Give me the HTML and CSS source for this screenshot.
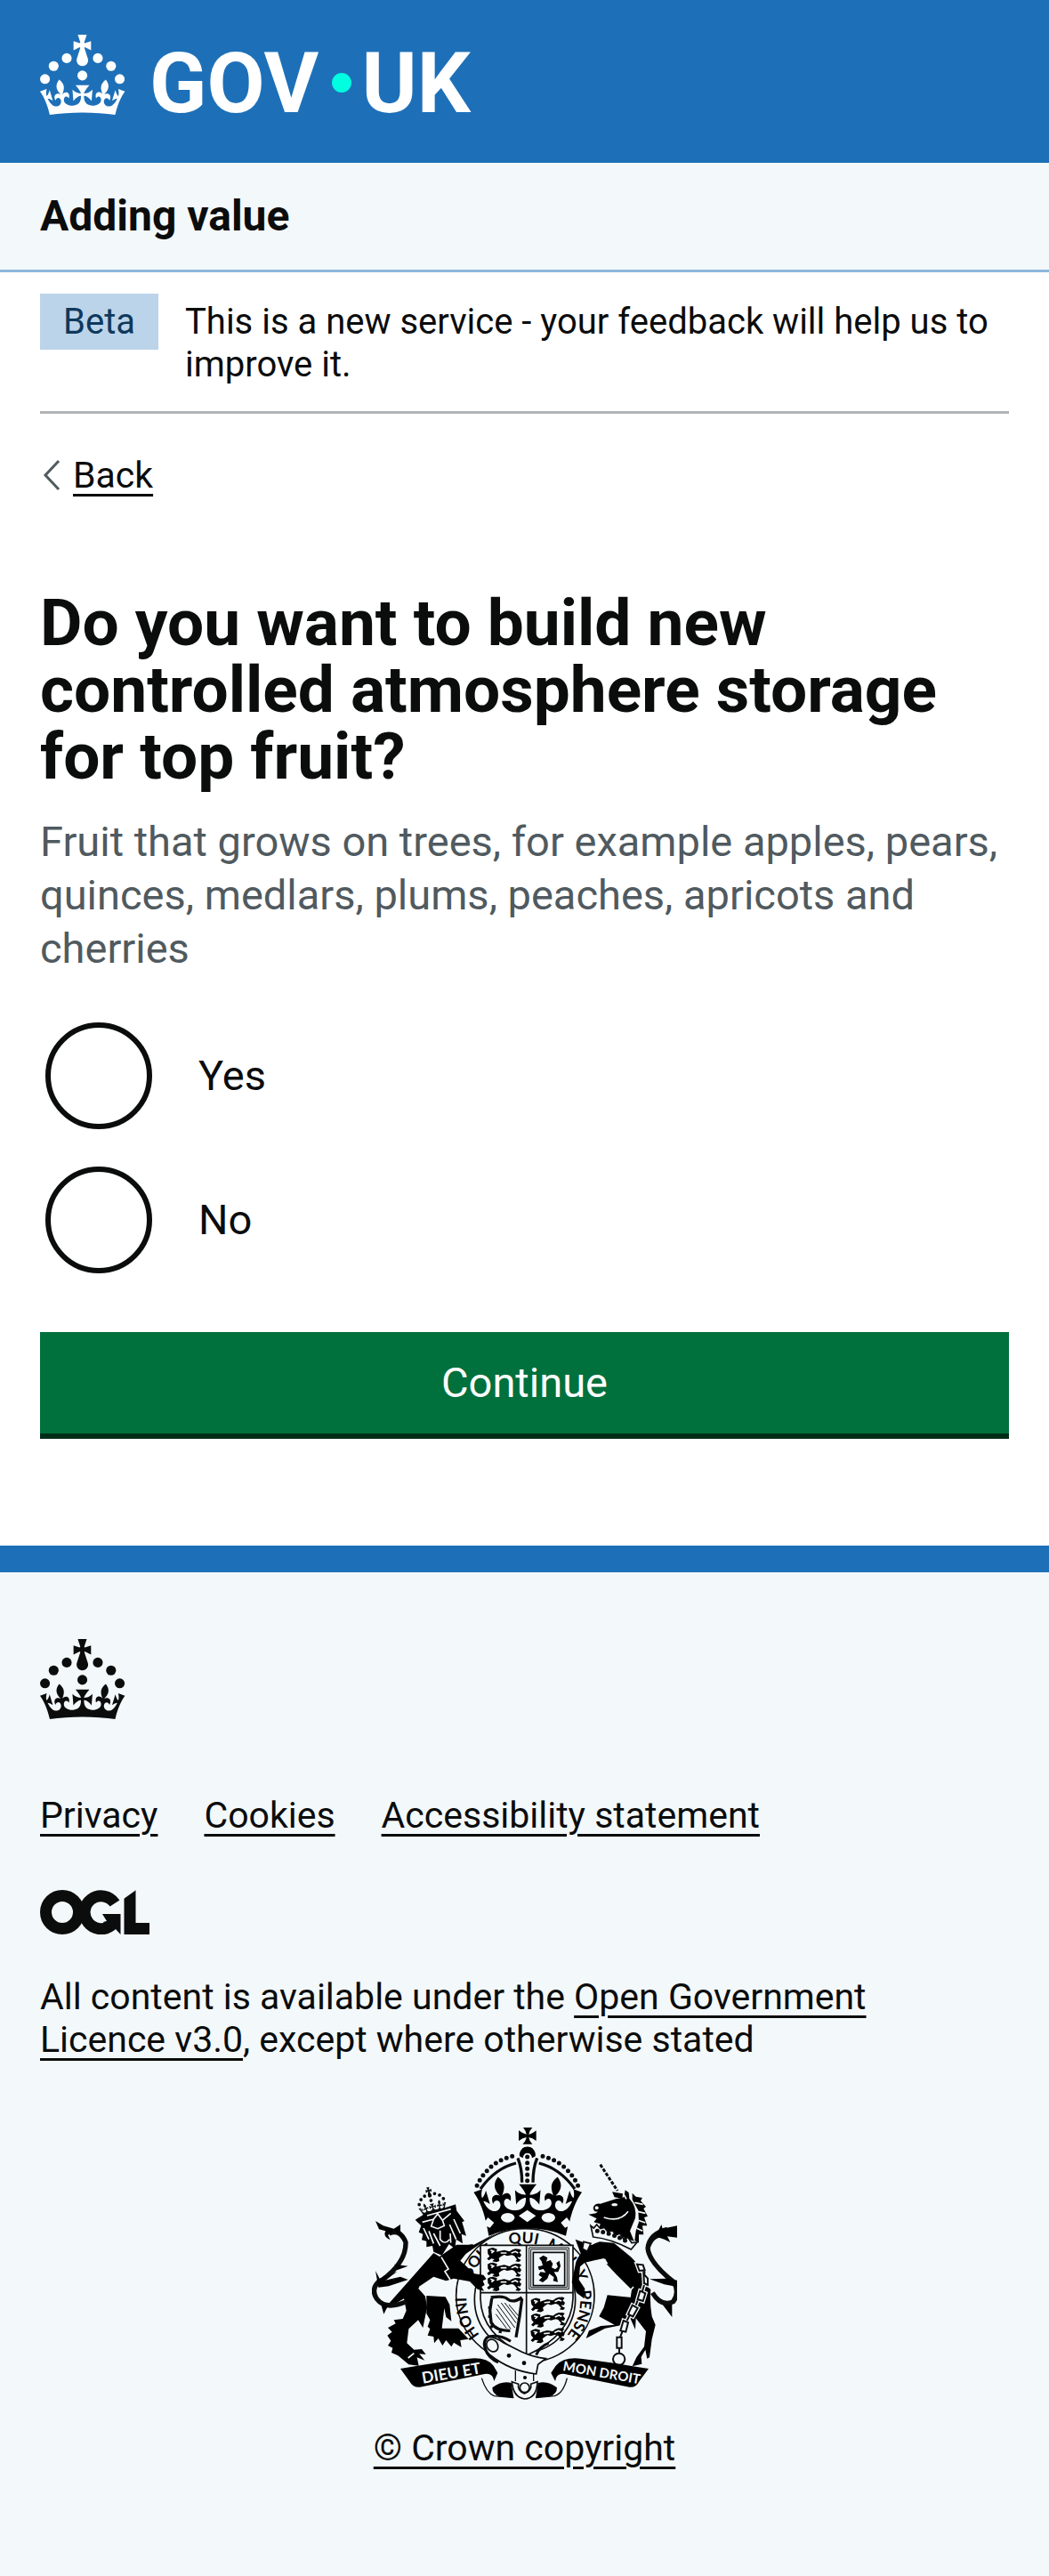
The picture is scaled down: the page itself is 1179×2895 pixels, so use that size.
FILE: index.html
```html
<!DOCTYPE html>
<html lang="en">
<head>
  <meta charset="utf-8">
  <meta name="viewport" content="width=device-width, initial-scale=1">
  <title>Do you want to build new controlled atmosphere storage for top fruit? - Adding value - GOV.UK</title>
  <link rel="stylesheet" href="styles.css">
</head>
<body>
  <header class="header">
    <a class="header-link" href="#" aria-label="GOV.UK">
      <svg class="header-logo" viewBox="0 0 324 60" aria-hidden="true">
        <g id="crown" fill="currentColor">
          <circle cx="20" cy="17.6" r="3.7"/><circle cx="10.2" cy="23.5" r="3.7"/><circle cx="3.7" cy="33.2" r="3.7"/><circle cx="31.7" cy="30.6" r="3.7"/><circle cx="43.3" cy="17.6" r="3.7"/><circle cx="53.2" cy="23.5" r="3.7"/><circle cx="59.7" cy="33.2" r="3.7"/>
          <path id="crown-body" d="M33.1,9.8c.2-.1.3-.3.5-.5l4.6,2.4v-6.8l-4.6,1.5c-.1-.2-.3-.3-.5-.5l1.9-5.9h-6.7l1.9,5.9c-.2.1-.3.3-.5.5l-4.6-1.5v6.8l4.6-2.4c.1.2.3.3.5.5l-2.6,8c-.9,2.8,1.2,5.7,4.1,5.7h0c3,0,5.1-2.9,4.1-5.7l-2.6-8ZM37,37.9s-3.4,3.8-4.1,6.1c2.2,0,4.2-.5,6.4-2.8l-.7,8.5c-2-2.8-4.4-4.1-5.7-3.8.1,3.1.5,6.7,5.8,7.2,3.7.3,6.7-1.5,7-3.8.4-2.6-2-4.3-3.7-1.6-1.4-4.5,2.4-6.1,4.9-3.2-1.9-4.5-1.8-7.7,2.4-10.9,3,4,2.6,7.3-1.2,11.1,2.4-1.3,6.2,0,4,4.6-1.2-2.8-3.7-2.2-4.2.2-.3,1.7.7,3.7,3,4.2,1.9.3,4.7-.9,7-5.9-1.3,0-2.4.7-3.9,1.7l2.4-8c.6,2.3,1.4,3.7,2.2,4.5.6-1.6.5-2.8,0-5.3l5,1.8c-2.6,3.6-5.2,8.7-7.3,17.5-7.4-1.1-15.7-1.7-24.5-1.7h0c-8.8,0-17.1.6-24.5,1.7-2.1-8.9-4.7-13.9-7.3-17.5l5-1.8c-.5,2.5-.6,3.7,0,5.3.8-.8,1.6-2.3,2.2-4.5l2.4,8c-1.5-1-2.6-1.7-3.9-1.7,2.3,5,5.2,6.2,7,5.9,2.3-.4,3.3-2.4,3-4.2-.5-2.4-3-3.1-4.2-.2-2.2-4.6,1.6-6,4-4.6-3.7-3.7-4.2-7.1-1.2-11.1,4.2,3.2,4.3,6.4,2.4,10.9,2.5-2.8,6.3-1.3,4.9,3.2-1.8-2.7-4.1-1-3.7,1.6.3,2.3,3.3,4.1,7,3.8,5.4-.5,5.7-4.2,5.8-7.2-1.3-.2-3.7,1-5.7,3.8l-.7-8.5c2.2,2.3,4.2,2.7,6.4,2.8-.7-2.3-4.1-6.1-4.1-6.1h10.6Z"/>
        </g>
        <text class="wordmark" x="82" y="58">GOV</text>
        <circle class="logo-dot" cx="226" cy="36" r="7.3"/>
        <text class="wordmark" x="241" y="58">UK</text>
      </svg>
    </a>
  </header>

  <nav class="service-nav" aria-label="Service information">
    <span class="service-name">Adding value</span>
  </nav>

  <div class="container">
    <div class="phase-banner">
      <strong class="tag">Beta</strong>
      <span class="phase-text">This is a new service - your feedback will help us to improve it.</span>
    </div>

    <a class="back-link" href="#">
      <svg class="back-arrow" viewBox="0 0 21 36" aria-hidden="true"><path d="M19 2 4 18 19 34"/></svg>
      <span class="back-text">Back</span>
    </a>

    <main>
      <form class="question" action="#" method="post">
        <fieldset class="fieldset" aria-describedby="fruit-hint">
          <legend class="legend"><h1 class="heading">Do you want to build new controlled atmosphere storage for top fruit?</h1></legend>
          <p class="hint" id="fruit-hint">Fruit that grows on trees, for example apples, pears, quinces, medlars, plums, peaches, apricots and cherries</p>
          <div class="radios">
            <div class="radio-item">
              <input class="radio" type="radio" id="storage-yes" name="storage" value="yes">
              <label class="radio-label" for="storage-yes">Yes</label>
            </div>
            <div class="radio-item">
              <input class="radio" type="radio" id="storage-no" name="storage" value="no">
              <label class="radio-label" for="storage-no">No</label>
            </div>
          </div>
        </fieldset>
        <button class="button" type="submit">Continue</button>
      </form>
    </main>
  </div>

  <footer class="footer">
    <svg class="footer-crown" viewBox="0 0 64 60" aria-hidden="true"><use href="#crown"/></svg>

    <ul class="footer-links">
      <li><a class="link" href="#">Privacy</a></li>
      <li><a class="link" href="#">Cookies</a></li>
      <li><a class="link" href="#">Accessibility statement</a></li>
    </ul>

    <svg class="ogl" viewBox="0 0 123 50" role="img" aria-label="Open Government Licence">
      <g fill="none" stroke="currentColor" stroke-width="13">
        <circle cx="25" cy="25" r="18.5"/>
        <path d="M84 15A18.500 18.500 0 1 0 81 39"/>
        <path d="M101 0V43.500H123"/>
      </g>
      <path fill="currentColor" d="M70 27H90.500V50L85 44 76 46 71 36 75 35Z"/>
      <path class="ogl-notch" d="M93 0H108L94 10Z"/>
    </svg>

    <p class="licence">All content is available under the <a class="link" href="#">Open Government Licence v3.0</a>, except where otherwise stated</p>

    <a class="copyright" href="#">
      <svg class="arms" viewBox="54 60 1029 924" aria-hidden="true">
        <defs>
          <path id="motto" d="M418 762A192 188 0 1 1 712 762"/>
          <clipPath id="crown-clip"><path d="M0 33H64V60H0Z"/></clipPath>
          <g id="lion-passant">
            <path d="M4 6 12 2 22 0 36 5 34 14 46 11 60 8 78 13 88 7 98 4 112 5 118 9 111 16 118 25 113 33 104 31 108 37 117 42 110 48 98 46 103 40 94 28 86 25 70 28 60 24 50 29 42 35 44 45 34 49 20 46 27 39 17 37 8 43 2 37 11 29 5 21Z"/>
            <path class="cut" d="M14 8 24 12 17 18M84 18 98 13 107 18M48 18 68 18"/>
          </g>
          <path id="chain-links" d="M948 524 968 526 974 544 956 546ZM970 556 984 572 984 594 972 588ZM958 614 976 622 968 648 950 642ZM932 662 950 672 934 700 918 692ZM902 714 918 720 910 752 892 748ZM880 770H896V806H880ZM867 844A20 20 0 1 1 907 844A20 20 0 1 1 867 844ZM972 546 974 556M972 594 966 614M950 646 944 662M922 698 914 714M898 752 891 770M888 806V824"/>
        </defs>

        <!-- Crown: cross, orb, arches and jewelled rim -->
        <path d="M564 63H595Q584 75 583 86 594 85 608 73V108Q596 97 583 96 584 107 595 119H562Q574 107 575 96 562 97 549 108V73Q563 84 575 86 574 75 564 63Z"/>
        <path d="M552 160A27 27 0 1 1 605 160L594 166Q592 149 578 149 565 149 563 166Z"/>
        <g class="pearls">
          <path d="M527 160C470 172 425 215 404 269"/>
          <path d="M630 160C687 172 732 215 753 269"/>
          <path d="M578 162V244"/>
        </g>
        <g class="line" stroke-width="10">
          <path d="M540 183Q470 200 420 270M617 183Q687 200 738 270M546 166Q560 200 560 248M611 166Q597 200 597 248"/>
        </g>
        <g transform="translate(397 37) scale(5.740)" clip-path="url(#crown-clip)"><use href="#crown-body"/></g>
        <path d="M432 345H725L708 428Q578 378 448 428Z"/>
        <g class="light">
          <ellipse cx="512" cy="367" rx="23" ry="16"/><ellipse cx="649" cy="367" rx="23" ry="16"/>
          <path d="M578 341 607 361 578 382 549 361ZM445 366 466 384 452 401 429 390ZM711 366 691 384 705 401 729 390Z"/>
        </g>

        <!-- Garter with motto -->
        <path d="M340 510Q370 450 398 458L470 420M740 440 800 462 770 520Z"/>
        <g class="band">
          <ellipse cx="571" cy="630" rx="233" ry="226"/>
          <ellipse cx="570" cy="642" rx="170" ry="178"/>
        </g>
        <g class="motto">
          <text><textPath href="#motto" startOffset="0%">HONI</textPath></text>
          <text><textPath href="#motto" startOffset="24%">SOIT</textPath></text>
          <text text-anchor="middle"><textPath href="#motto" startOffset="50%">QUI</textPath></text>
          <text><textPath href="#motto" startOffset="59%">MAL</textPath></text>
          <text text-anchor="middle"><textPath href="#motto" startOffset="76%">Y</textPath></text>
          <text text-anchor="end"><textPath href="#motto" startOffset="100%">PENSE</textPath></text>
        </g>

        <!-- Quartered shield -->
        <path class="panel" d="M420 460H732V640Q728 762 575 832 422 762 420 640Z"/>
        <path class="line" stroke-width="5" d="M575 460V832M420 620H732"/>
        <use href="#lion-passant" x="440" y="468"/><use href="#lion-passant" x="440" y="518"/><use href="#lion-passant" x="440" y="566"/>
        <g transform="rotate(-5 650 690)"><use href="#lion-passant" x="590" y="634"/><use href="#lion-passant" x="586" y="686"/><use href="#lion-passant" x="580" y="738"/></g>
        <path class="line" stroke-width="3" d="M584 468H718V608H584ZM590 474H712V602H590Z"/>
        <path class="line" stroke-width="5" d="M598 484H704V596H598Z"/>
        <path d="M618 503 632 494 646 502 642 515 656 510 664 522 660 535 672 541 681 533 676 520 686 512 690 530 682 550 668 550 678 568 681 584 665 580 668 568 652 556 646 572 630 585 617 578 628 568 616 560 622 550 640 552 632 540 618 544 614 532 630 528 626 514Z"/>
        <path class="line" stroke-width="10" d="M455 636Q500 628 512 642 530 656 560 636M458 640 452 680 456 720Q470 748 520 748M560 640 552 700 540 770M455 670H446M455 700H446M462 728 455 738M488 744 486 756"/>
        <path class="line" stroke-width="3" d="M478 660 536 738M490 654 540 722M502 654 545 710M474 674 522 742M472 692 508 740M516 660 548 698"/>

        <!-- Garter buckle -->
        <path class="strap" d="M440 770Q465 765 500 790L560 820Q600 838 640 842L614 862 608 894Q520 884 450 828 428 805 440 770Z"/>
        <path class="line" stroke-width="9" d="M522 784Q486 760 448 768 424 780 438 815 448 840 480 855M608 830Q620 800 650 790"/>
        <ellipse class="strap" cx="460" cy="798" rx="18" ry="22" transform="rotate(-35 460 798)"/>
        <circle cx="516" cy="832" r="7"/><circle cx="567" cy="857" r="7"/><circle cx="570" cy="906" r="6"/>
        <path class="line" stroke-width="4" d="M538 882V918M599 892V918"/>

        <!-- Lion supporter -->
        <g transform="translate(196 276) rotate(-14) scale(1.500)"><use href="#crown"/></g>
        <path d="M200 374 226 358 336 322 340 344 366 378 358 382 372 428 356 422 360 454 338 440 334 472 314 456 290 494 262 482 258 462 238 466 238 446 222 442 226 422 212 416 220 394Z"/>
        <path class="cut" d="M224 382 262 372 276 354 292 376 320 352M262 372 254 396 276 404 298 394 292 376M284 410V440Q300 460 316 440M284 462 262 420M246 412 262 454M228 402 246 440M330 372 352 420M316 390 338 440M318 420 320 452M240 360 320 338"/>
        <path d="M262 486 282 498 340 458 395 458 352 512 400 556 430 560 440 574 428 580 434 594 424 600 432 614 410 608 384 582 330 572 304 580 262 566 212 600 234 632 240 670 226 738 210 712 178 742 172 790 196 812 222 810 236 828 214 826 232 848 206 838 212 866 178 862 142 832 120 822 124 806 108 798 118 782 106 764 122 752 108 738 134 724 128 712 158 708 170 680 162 640 120 664 108 660Z"/>
        <path class="cut" d="M288 500 312 540 300 548 318 576M226 600 214 606 238 632M176 840 196 824"/>
        <path d="M238 630 302 634 316 660 322 716 304 702 298 672 290 740 346 740 380 776 352 780 356 804 330 788 322 802 304 780 292 798 278 774 264 790 262 768 242 764 250 742 242 734 250 712 238 690Z"/>
        <g class="line tail">
          <path d="M170 650Q100 680 70 640 48 606 82 578M82 582Q170 520 168 450 150 404 112 420"/>
        </g>
        <path d="M66 378 92 394 128 404 150 390 150 412 172 440 160 446 130 410 108 426 116 442Q90 430 100 412L78 406ZM66 546 80 572 140 548 98 578 150 566 176 576 110 598 76 602ZM84 656 110 660 94 692ZM130 524 176 530 138 544Z"/>

        <!-- Unicorn supporter -->
        <path class="horn" d="M824 188 882 276"/>
        <path d="M864 280 900 286 898 302 872 298ZM800 334Q804 318 824 320L876 304 904 298 908 274 920 282 922 302Q948 330 942 368L924 412 938 446 820 404 824 388 802 382 812 370 784 356 810 352 816 346Q802 350 800 334Z"/>
        <path d="M932 284 944 296 966 300 960 310 978 330 970 336 984 362 972 366 982 394 966 394 970 424 954 424 954 452 940 444 944 412 954 382 952 342 932 306Z"/>
        <path class="cut" d="M836 366Q890 384 918 346M940 316 968 322M950 346 976 352M952 376 976 384M946 402 966 412M904 290 912 304"/>
        <ellipse class="light" cx="872" cy="323" rx="10" ry="5"/><circle class="light" cx="812" cy="334" r="6"/>
        <path class="panel" d="M792 394 802 402 812 390 824 404 838 400 850 416 864 408 876 426 890 420 902 438 918 434 930 452 948 450 928 474Q860 438 800 432Z"/>
        <path class="pearls" d="M814 412Q866 420 922 452"/>
        <path d="M742 516Q762 468 822 448L870 452 914 488Q958 520 966 572L994 610Q990 650 998 700L1010 728 998 776 990 838 982 842 976 812 962 836 964 860 932 868 946 838 972 802 978 750 944 706 942 744 918 690 930 610 880 560 846 524 836 504 772 518 756 532 752 576 772 606 770 640 744 620 728 584Z"/>
        <path class="cut" d="M838 506 846 520 806 512M936 600 914 624"/>
        <path d="M848 628 930 636 916 700 900 728 840 740 776 774 786 748 826 732 872 728 820 700 836 670Z"/>
        <path class="strap" d="M768 448 792 454 780 480 764 472Z"/>
        <g class="line tail">
          <path d="M1000 620Q1030 670 1070 650 1092 620 1072 584 990 520 984 470 1000 414 1050 430M984 470Q990 420 1050 406"/>
        </g>
        <path d="M1030 390 1034 404 1083 394V434L1050 430 1060 450 1040 440 1010 430ZM990 574 1050 572 1083 578V600L1040 592ZM1034 660 1066 702 1066 660Z"/>
        <use class="chain-halo" href="#chain-links"/>
        <use class="chain" href="#chain-links"/>

        <!-- Scrolls -->
        <path d="M150 876Q290 852 382 842 440 836 464 866L478 890 466 918Q462 890 434 894L216 938Q192 940 182 920Z"/>
        <path d="M987 876Q846 852 758 842 700 836 674 866L658 890 672 918Q676 890 704 894L922 938Q946 940 954 920Z"/>
        <text class="scroll-text" transform="translate(226 926) rotate(-10)">DIEU ET</text>
        <text class="scroll-text scroll-text-right" transform="translate(696 882) rotate(10)">MON DROIT</text>
        <path d="M460 940Q490 916 524 924L532 974 484 970Q460 962 460 940ZM678 940Q648 916 614 924L606 974 654 970Q678 962 678 940Z"/>
        <path class="line" stroke-width="4" d="M424 908Q440 958 466 968L532 974M712 908Q700 958 670 968L606 974"/>
        <path class="strap" d="M526 920 548 928Q544 950 568 960 594 950 590 928L612 920Q610 976 568 978 530 972 526 920Z"/>
        <circle class="strap" cx="569" cy="940" r="16"/>
      </svg>
      <span class="copyright-text">© Crown copyright</span>
    </a>
  </footer>
</body>
</html>
```
FILE: styles.css
```css
:root {
  --ink: #0b0c0c;
  --blue: #1d70b8;
  --pale: #f3f8fa;
  --gutter: 45px;
}

* {
  box-sizing: border-box;
}

body {
  margin: 0;
  background: #fff;
  color: var(--ink);
  font-family: Roboto, "Liberation Sans", sans-serif;
  font-size: 41px;
  line-height: 48px;
}

.header {
  padding: 39px var(--gutter) 54px;
  background: var(--blue);
}

.header-link {
  display: block;
  color: #fff;
}

.header-logo {
  display: block;
  width: 486px;
  height: 90px;
  overflow: visible;
}

.wordmark {
  fill: #fff;
  font-size: 63px;
  font-weight: 700;
}

.logo-dot {
  fill: #00ffe0;
}

.service-nav {
  padding: 30px var(--gutter);
  border-bottom: 3px solid #8eb8dc;
  background: var(--pale);
}

.service-name {
  display: block;
  font-size: 48px;
  font-weight: 700;
  line-height: 60px;
}

.container {
  padding: 0 var(--gutter);
}

.phase-banner {
  display: flex;
  align-items: flex-start;
  gap: 30px;
  padding: 24px 0 28px;
  border-bottom: 3px solid #b1b4b6;
  font-size: 40px;
}

.tag {
  padding: 8px 26px 7px;
  background: #bbd4ea;
  color: #0f385c;
  font-weight: 400;
}

.phase-text {
  padding-top: 8px;
}

.back-link {
  display: flex;
  align-items: center;
  gap: 14px;
  width: fit-content;
  margin-top: 45px;
  color: var(--ink);
  text-decoration: none;
}

.back-arrow {
  width: 21px;
  height: 36px;
  margin-left: 2px;
  fill: none;
  stroke: #505a5f;
  stroke-width: 3;
}

.back-text,
.link,
.copyright-text {
  color: var(--ink);
  text-decoration: underline;
  text-decoration-thickness: 3px;
  text-underline-offset: 7px;
}

.question {
  padding: 105px 0 126px;
}

.fieldset {
  min-width: 0;
  margin: 0;
  padding: 0;
  border: 0;
}

.legend {
  padding: 0;
}

.heading {
  margin: 0;
  font-size: 73px;
  line-height: 75px;
}

.hint {
  margin: 28px 0 53px;
  color: #505a5f;
  font-size: 47px;
  line-height: 60px;
}

.radios {
  display: grid;
  gap: 42px;
  padding-left: 6px;
}

.radio-item {
  display: flex;
  align-items: center;
  gap: 52px;
}

.radio {
  flex: none;
  width: 120px;
  height: 120px;
  margin: 0;
  border: 6px solid var(--ink);
  border-radius: 50%;
  appearance: none;
  background: transparent;
}

.radio:checked {
  background: radial-gradient(circle, var(--ink) 30px, transparent 31px);
}

.radio-label {
  font-size: 47px;
  line-height: 60px;
}

.button {
  display: block;
  width: 100%;
  margin: 66px 0 0;
  padding: 27px 30px;
  border: 0;
  background: #00703c;
  box-shadow: 0 6px 0 #002d18;
  color: #fff;
  font-family: inherit;
  font-size: 47px;
  line-height: 60px;
}

.footer {
  display: flex;
  flex-direction: column;
  align-items: flex-start;
  padding: 75px var(--gutter) 120px;
  border-top: 30px solid var(--blue);
  background: var(--pale);
}

.footer-crown {
  width: 96px;
  height: 90px;
}

.footer-links {
  display: flex;
  flex-wrap: wrap;
  gap: 15px 52px;
  margin: 84px 0 60px;
  padding: 0;
  list-style: none;
}

.ogl {
  width: 123px;
  height: 50px;
}

.ogl-notch {
  fill: var(--pale);
}

.licence {
  max-width: 960px;
  margin: 46px 0 74px;
}

.copyright {
  display: flex;
  flex-direction: column;
  align-items: center;
  align-self: center;
  gap: 29px;
  color: var(--ink);
  text-decoration: none;
}

.arms {
  width: 343px;
  height: 308px;
}

.light {
  fill: var(--pale);
}

.line,
.pearls,
.cut,
.horn {
  fill: none;
  stroke: var(--ink);
}

.pearls {
  stroke-width: 15;
  stroke-linecap: round;
  stroke-dasharray: 0 20;
}

.cut {
  stroke: var(--pale);
  stroke-width: 5;
}

.horn {
  stroke-width: 9;
  stroke-dasharray: 12 5;
}

.chain {
  fill: var(--pale);
  stroke: var(--ink);
  stroke-width: 6;
}

.chain-halo {
  fill: none;
  stroke: var(--pale);
  stroke-width: 14;
}

.tail {
  stroke-width: 16;
}

.band,
.panel,
.strap {
  fill: var(--pale);
  stroke: var(--ink);
  stroke-width: 5;
}

.motto {
  font-family: Lato, sans-serif;
  font-size: 52px;
  font-weight: 700;
}

.scroll-text {
  fill: var(--pale);
  font-family: Lato, sans-serif;
  font-size: 53px;
  font-weight: 700;
}

.scroll-text-right {
  font-size: 45px;
}
```
